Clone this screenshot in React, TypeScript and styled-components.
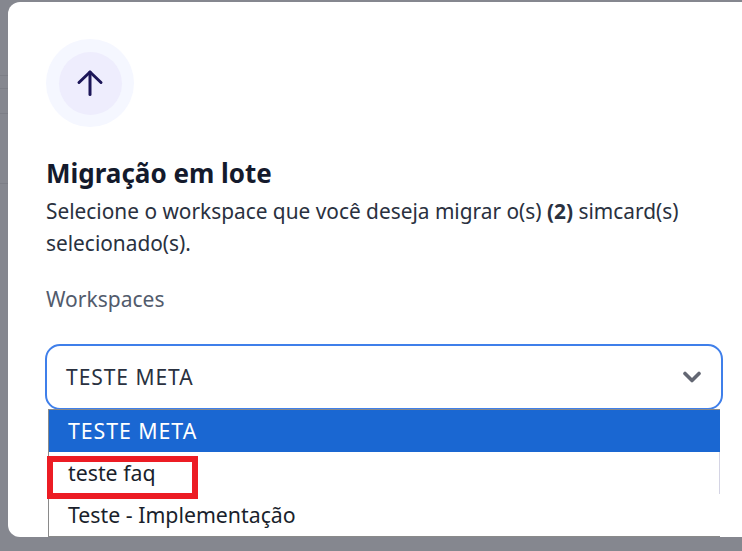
import React from "react";
import styled, { createGlobalStyle } from "styled-components";

const Global = createGlobalStyle`
  html, body { margin: 0; padding: 0; background: #85878f; }
  body { font-family: "Noto Sans", "Open Sans", sans-serif; overflow: hidden; }
`;

const Page = styled.div`
  width: 742px;
  height: 551px;
  display: flex;
  overflow: hidden;
  background: #85878f;
`;

const Strip = styled.div`
  width: 8px;
  flex: none;
  display: flex;
  flex-direction: column;
  padding-top: 75px;
  box-sizing: border-box;
`;

const StripLine = styled.div<{ $gap: number }>`
  height: 1px;
  background: #7c7e86;
  margin-bottom: ${(p) => p.$gap}px;
`;

const Modal = styled.div`
  position: relative;
  flex: 1;
  height: 535px;
  margin-top: 2px;
  background: #fff;
  border-radius: 12px 0 0 12px;
  padding: 37px 20px 0 38px;
  box-sizing: border-box;
`;

const IconHalo = styled.div`
  width: 88px;
  height: 88px;
  border-radius: 50%;
  background: #f5f7ff;
  display: flex;
  align-items: center;
  justify-content: center;
`;

const IconDisc = styled.div`
  width: 63px;
  height: 63px;
  border-radius: 50%;
  background: #eeedfd;
  display: flex;
  align-items: center;
  justify-content: center;
  color: #1c1658;
`;

const Title = styled.h2`
  margin: 28px 0 0;
  font-size: 26px;
  line-height: 36px;
  font-weight: 700;
  color: #141a2c;
`;

const Description = styled.p`
  margin: 4px 0 0;
  font-size: 20.85px;
  line-height: 32px;
  color: #2a3140;
  width: 665px;
  b { font-weight: 700; }
`;

const FieldLabel = styled.div`
  margin-top: 26px;
  font-size: 21px;
  line-height: 28px;
  color: #525b6c;
`;

const Select = styled.div`
  margin: 31px 0 0 -1px;
  width: 678px;
  height: 66px;
  box-sizing: border-box;
  border: 2px solid #3f7fea;
  border-radius: 15px;
  padding: 0 20px 0 19px;
  display: flex;
  align-items: center;
  justify-content: space-between;
  font-size: 21px;
  letter-spacing: 0.95px;
  color: #2a3140;
`;

const Menu = styled.ul`
  position: absolute;
  left: 40px;
  top: 407px;
  width: 672px;
  height: 128px;
  margin: 0;
  padding: 0;
  list-style: none;
  box-sizing: border-box;
  background: #fff;
  border-left: 1px solid #8a8a8a;
  border-top: 1px solid #8a8a8a;
  border-bottom: 1px solid #8a8a8a;
  font-size: 21.3px;
`;

const MenuItem = styled.li<{ $active?: boolean; $height: number; $caps?: boolean; $edge?: boolean }>`
  height: ${(p) => p.$height}px;
  line-height: ${(p) => p.$height}px;
  padding-left: 19px;
  letter-spacing: ${(p) => (p.$caps ? "0.95px" : "0")};
  background: ${(p) => (p.$active ? "#1a67d2" : "#fff")};
  color: ${(p) => (p.$active ? "#fff" : "#1a1f2c")};
  box-shadow: ${(p) => (p.$edge ? "inset -1px 0 0 #d4d4e4" : "none")};
`;

const Highlight = styled.div`
  position: absolute;
  left: 39px;
  top: 454px;
  width: 151px;
  height: 43px;
  box-sizing: border-box;
  border: 6px solid #ec1c24;
`;

export default function App() {
  return (
    <Page>
      <Global />
      <Strip>
        <StripLine $gap={12} />
        <StripLine $gap={24} />
        <StripLine $gap={69} />
        <StripLine $gap={0} />
      </Strip>
      <Modal>
        <IconHalo>
          <IconDisc>
            <svg width="28" height="28" viewBox="0 0 28 28" fill="none" stroke="currentColor" strokeWidth="3" strokeLinecap="round" strokeLinejoin="round">
              <path d="M14 25.5V3" />
              <path d="M3 13.5 14 3l11 10.5" />
            </svg>
          </IconDisc>
        </IconHalo>
        <Title>Migração em lote</Title>
        <Description>
          Selecione o workspace que você deseja migrar o(s) <b>(2)</b> simcard(s) selecionado(s).
        </Description>
        <FieldLabel>Workspaces</FieldLabel>
        <Select>
          <span>TESTE META</span>
          <svg width="18" height="12" viewBox="0 0 18 12" fill="none" stroke="#636773" strokeWidth="3.6" strokeLinecap="round" strokeLinejoin="round">
            <path d="M2 2.5 9 9.5l7-7" />
          </svg>
        </Select>
        <Menu>
          <MenuItem $active $caps $height={42}>TESTE META</MenuItem>
          <MenuItem $edge $height={42}>teste faq</MenuItem>
          <MenuItem $height={42}>Teste - Implementação</MenuItem>
        </Menu>
        <Highlight />
      </Modal>
    </Page>
  );
}
